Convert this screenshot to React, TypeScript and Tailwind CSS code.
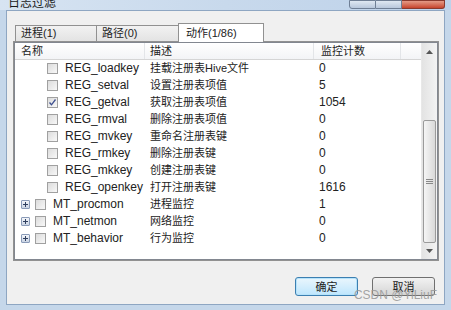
import React from "react";

const font = { fontFamily: '"Liberation Sans", "Noto Sans CJK SC", sans-serif' };

type Row = { name: string; desc: string; count: string; checked?: boolean; group?: boolean };

const rows: Row[] = [
  { name: "REG_loadkey", desc: "挂载注册表Hive文件", count: "0" },
  { name: "REG_setval", desc: "设置注册表项值", count: "5" },
  { name: "REG_getval", desc: "获取注册表项值", count: "1054", checked: true },
  { name: "REG_rmval", desc: "删除注册表项值", count: "0" },
  { name: "REG_mvkey", desc: "重命名注册表键", count: "0" },
  { name: "REG_rmkey", desc: "删除注册表键", count: "0" },
  { name: "REG_mkkey", desc: "创建注册表键", count: "0" },
  { name: "REG_openkey", desc: "打开注册表键", count: "1616" },
  { name: "MT_procmon", desc: "进程监控", count: "1", group: true },
  { name: "MT_netmon", desc: "网络监控", count: "0", group: true },
  { name: "MT_behavior", desc: "行为监控", count: "0", group: true },
];

function Check({ checked }: { checked?: boolean }) {
  return (
    <div className="w-[11px] h-[11px] border border-[#a0a0a0] bg-gradient-to-br from-[#dcdcdc] to-[#f8f8f8] flex items-center justify-center">
      {checked && (
        <svg width="9" height="9" viewBox="0 0 9 9">
          <path d="M1.5 4.5 L3.5 6.8 L7.5 1.5" fill="none" stroke="#3d4f8f" strokeWidth="1.3" />
        </svg>
      )}
    </div>
  );
}

function Plus() {
  return (
    <div className="w-[9px] h-[9px] border border-[#8a9bb8] rounded-[1px] bg-gradient-to-b from-[#f4f6fa] to-[#c9d3e3] flex items-center justify-center">
      <svg width="5" height="5" viewBox="0 0 5 5">
        <path d="M0 2.5 H5 M2.5 0 V5" stroke="#2f3f5f" strokeWidth="1" />
      </svg>
    </div>
  );
}

export default function App() {
  return (
    <div className="w-[451px] h-[310px] bg-[#c5d7ea] flex flex-col overflow-hidden text-[11px] text-[#222]" style={font}>
      {/* title bar */}
      <div className="h-[10px] flex items-start justify-between bg-gradient-to-r from-[#d7e4f2] via-[#c8d9ec] to-[#bdd2ea] pl-[8px] pr-[6px]">
        <div className="text-[12px] leading-[12px] -mt-[3px] text-[#1b1b1b]">日志过滤</div>
        <div className="flex h-[9px]">
          <div className="w-[27px] border border-[#6f7f95] rounded-bl-[3px] bg-gradient-to-b from-[#dfe8f2] to-[#b8c8dc]" />
          <div className="w-[26px] border-y border-r border-[#6f7f95] bg-gradient-to-b from-[#dfe8f2] to-[#b8c8dc]" />
          <div className="w-[43px] border-y border-r border-[#8a3a2e] rounded-br-[3px] bg-gradient-to-b from-[#e49a86] to-[#c6432c]" />
        </div>
      </div>

      <div className="flex-1 flex px-[6px] pb-[5px]">
        <div className="flex-1 bg-[#f0f0f0] border border-[#8ea6c2] flex flex-col pt-[12px] pl-[6px] pr-[5px]">
          {/* tabs */}
          <div className="flex items-end h-[18px] pl-[2px] relative z-10">
            <div className="w-[82px] h-[16px] border border-[#919191] border-b-0 bg-gradient-to-b from-[#f2f2f2] to-[#e3e3e3] pl-[5px] leading-[15px]">进程(1)</div>
            <div className="w-[82px] h-[16px] border border-l-0 border-[#919191] border-b-0 bg-gradient-to-b from-[#f2f2f2] to-[#e3e3e3] pl-[5px] leading-[15px]">路径(0)</div>
            <div className="w-[86px] h-[19px] -ml-[1px] -mb-[1px] border border-[#919191] border-b-0 bg-white pl-[7px] leading-[18px]">动作(1/86)</div>
          </div>
          {/* tab page */}
          <div className="h-[220px] bg-white border border-[#919191] flex flex-col">
            <div className="flex-1 border border-[#828790] flex">
              <div className="flex-1 flex flex-col">
                {/* header */}
                <div className="h-[17px] flex bg-gradient-to-b from-white to-[#f3f4f6] border-b border-[#d5d5d5] leading-[16px]">
                  <div className="w-[130px] pl-[6px] border-r border-[#e3e5e8]">名称</div>
                  <div className="w-[169px] pl-[5px] border-r border-[#e3e5e8]">描述</div>
                  <div className="w-[87px] pl-[7px] border-r border-[#e3e5e8]">监控计数</div>
                  <div className="flex-1" />
                </div>
                {rows.map((r) => (
                  <div key={r.name} className="h-[17px] flex items-center leading-[17px]">
                    <div className="w-[130px] flex items-center">
                      {r.group ? (
                        <>
                          <div className="ml-[6px]"><Plus /></div>
                          <div className="ml-[5px]"><Check checked={r.checked} /></div>
                          <span className="ml-[7px] text-[12px]">{r.name}</span>
                        </>
                      ) : (
                        <>
                          <div className="ml-[32px]"><Check checked={r.checked} /></div>
                          <span className="ml-[7px] text-[12px]">{r.name}</span>
                        </>
                      )}
                    </div>
                    <div className="w-[169px] pl-[5px]">{r.desc}</div>
                    <div className="w-[87px] pl-[5px] text-[12px]">{r.count}</div>
                  </div>
                ))}
              </div>
              {/* scrollbar */}
              <div className="w-[16px] bg-gradient-to-r from-[#e3e3e3] to-[#f3f3f3] border-l border-[#e8e8e8] flex flex-col">
                <div className="h-[17px] flex items-center justify-center">
                  <svg width="7" height="4" viewBox="0 0 7 4"><path d="M0 4 L3.5 0 L7 4Z" fill="#555" /></svg>
                </div>
                <div className="h-[60px]" />
                <div className="h-[123px] mx-[1px] border border-[#9a9a9a] rounded-[2px] bg-gradient-to-r from-[#f5f5f5] to-[#d9d9d9] flex items-center justify-center">
                  <svg width="7" height="7" viewBox="0 0 7 7"><path d="M0 1.5 H7 M0 3.5 H7 M0 5.5 H7" stroke="#888" strokeWidth="1" /></svg>
                </div>
                <div className="flex-1 flex items-center justify-center">
                  <svg width="7" height="4" viewBox="0 0 7 4"><path d="M0 0 L3.5 4 L7 0Z" fill="#555" /></svg>
                </div>
              </div>
            </div>
          </div>
          {/* buttons */}
          <div className="flex justify-end gap-[14px] pr-[4px] mt-[16px] relative">
            <button className="w-[63px] h-[19px] border border-[#3c7fb1] rounded-[3px] bg-gradient-to-b from-[#eaf6fd] to-[#bee6fd] shadow-[inset_0_0_0_1px_#b6e3fb] leading-[16px]">确定</button>
            <button className="w-[63px] h-[19px] border border-[#707070] rounded-[3px] bg-gradient-to-b from-[#f2f2f2] to-[#d5d5d5] leading-[16px]">取消</button>
            <div className="absolute right-[2px] top-[9px] text-[12px] text-[#9a9a9a]/90">CSDN @YiLiuF</div>
          </div>
        </div>
      </div>
    </div>
  );
}
